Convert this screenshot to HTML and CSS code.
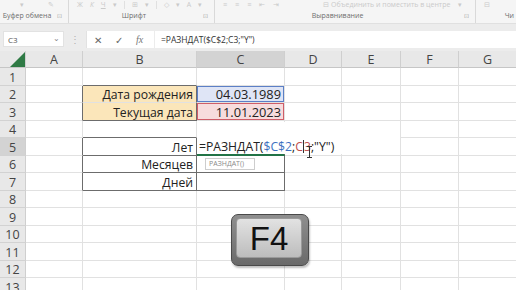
FILE: index.html
```html
<!DOCTYPE html>
<html lang="ru">
<head>
  <meta charset="UTF-8">
  <title>РАЗНДАТ</title>
  <link rel="stylesheet" href="styles.css">
</head>
<body>
  <!-- Ribbon (faded) -->
  <div class="ribbon">
    <div class="group g-clip">
      <div class="tools"><span>▾</span><span>✎</span></div>
      <div class="glabel">Буфер обмена</div>
      <span class="launcher">⊡</span>
    </div>
    <div class="group g-font">
      <div class="tools"><b>Ж</b><i>К</i><u>Ч</u><span>▾</span><span class="sep"></span><span>⊞</span><span>▾</span><span class="sep"></span><span>◇</span><span>▾</span><span>A</span><span>▾</span></div>
      <div class="glabel">Шрифт</div>
      <span class="launcher">⊡</span>
    </div>
    <div class="group g-align">
      <div class="tools"><span>≡</span><span>≡</span><span>≡</span><span>⇤</span><span>⇥</span><span class="merge">⊟ Объединить и поместить в центре</span><span>▾</span></div>
      <div class="glabel">Выравнивание</div>
      <span class="launcher">⊡</span>
    </div>
    <div class="group g-num">
      <div class="tools"><span>⊟</span></div>
      <div class="glabel">Чи</div>
    </div>
  </div>

  <!-- Formula bar -->
  <div class="formula-bar">
    <div class="name-box"><span>C3</span><span class="nb-arrow">⌄</span></div>
    <div class="fb-dots">⋮</div>
    <div class="fb-main">
      <span class="fb-btn">✕</span>
      <span class="fb-btn">✓</span>
      <span class="fb-btn fx">fx</span>
      <div class="fb-text">=РАЗНДАТ($C$2;C3;"Y")</div>
    </div>
  </div>

  <!-- Sheet -->
  <div class="sheet-wrap">
    <table class="sheet">
      <colgroup>
        <col style="width:26px"><col style="width:57px"><col style="width:114px"><col style="width:88px">
        <col style="width:57px"><col style="width:59px"><col style="width:58px"><col style="width:58px">
      </colgroup>
      <tr class="head">
        <th class="corner"><svg width="17" height="15" viewBox="0 0 17 15"><polygon points="17,0 17,15 2,15" fill="#2f7a45"/></svg></th>
        <th>A</th><th>B</th><th class="active">C</th><th>D</th><th>E</th><th>F</th><th>G</th>
      </tr>
      <tr><th>1</th><td></td><td class="bb-dark"></td><td></td><td></td><td></td><td></td><td></td></tr>
      <tr><th>2</th><td class="br-dark"></td><td class="lbl fill-y br-dark">Дата рождения</td><td class="num fill-blue">04.03.1989</td><td></td><td></td><td></td><td></td></tr>
      <tr><th>3</th><td class="br-dark"></td><td class="lbl fill-y br-dark bb-dark">Текущая дата</td><td class="num fill-red">11.01.2023</td><td></td><td></td><td></td><td></td></tr>
      <tr><th>4</th><td></td><td class="bb-dark"></td><td class="bb-dark"></td><td></td><td></td><td></td><td></td></tr>
      <tr><th class="active">5</th><td class="br-dark"></td><td class="lbl br-dark bb-dark">Лет</td><td class="br-dark bb-green"></td><td></td><td></td><td></td><td></td></tr>
      <tr><th>6</th><td class="br-dark"></td><td class="lbl br-dark bb-dark">Месяцев</td><td class="br-dark bb-dark"></td><td></td><td></td><td></td><td></td></tr>
      <tr><th>7</th><td class="br-dark"></td><td class="lbl br-dark bb-dark">Дней</td><td class="br-dark bb-dark"></td><td></td><td></td><td></td><td></td></tr>
      <tr><th>8</th><td></td><td></td><td></td><td></td><td></td><td></td><td></td></tr>
      <tr><th>9</th><td></td><td></td><td></td><td></td><td></td><td></td><td></td></tr>
      <tr><th>10</th><td></td><td></td><td></td><td></td><td></td><td></td><td></td></tr>
      <tr><th>11</th><td></td><td></td><td></td><td></td><td></td><td></td><td></td></tr>
      <tr><th>12</th><td></td><td></td><td></td><td></td><td></td><td></td><td></td></tr>
      <tr><th>13</th><td></td><td></td><td></td><td></td><td></td><td></td><td></td></tr>
    </table>

    <!-- in-cell editor for C5 -->
    <div class="editor">
      <span>=РАЗНДАТ(</span><span class="ref-blue">$C$2</span><span>;</span><span class="ref-red">C<i class="caret"></i>3</span><span>;"Y")</span>
      <svg class="ibeam" width="7" height="12" viewBox="0 0 7 12"><path d="M1 0.5h5M3.5 0.5v11M1 11.5h5" stroke="#333" stroke-width="1" fill="none"/></svg>
    </div>
    <div class="tip">РАЗНДАТ()</div>

    <!-- F4 key -->
    <div class="key"><div class="key-face">F4</div></div>
  </div>
</body>
</html>
```

FILE: styles.css
```css
body {
  margin: 0;
  width: 516px;
  height: 290px;
  overflow: hidden;
  background: #ffffff;
  font-family: "Open Sans", "Noto Sans", sans-serif;
}

/* ribbon */
.ribbon {
  display: flex;
  height: 23px;
  background: #f5f5f5;
  border-bottom: 1px solid #e0e0e0;
  color: #6e6e6e;
  font-size: 7px;
}

.group {
  position: relative;
  display: flex;
  flex-direction: column;
  justify-content: space-between;
  border-right: 1px solid #d9d9d9;
  box-sizing: border-box;
  padding-bottom: 2px;
  overflow: hidden;
}

.g-clip { width: 69px; }
.g-font { width: 146px; }
.g-align { width: 261px; }
.g-num { flex: 1; border-right: none; }

.tools {
  display: flex;
  align-items: center;
  gap: 8px;
  height: 9px;
  color: #cacaca;
  font-size: 7px;
  line-height: 9px;
  padding-left: 8px;
  white-space: nowrap;
}

.tools > * { flex-shrink: 0; }
.tools b, .tools i, .tools u { font-weight: normal; }
.tools .sep { width: 1px; height: 8px; background: #e0e0e0; }
.g-clip .tools { padding-left: 20px; gap: 24px; }
.g-font .tools { gap: 7px; }
.g-align .tools { gap: 8px; }
.tools .merge { margin-left: 36px; font-size: 7px; }
.g-num .tools { padding-left: 8px; }

.glabel {
  padding-right: 15px;
  text-align: center;
  line-height: 10px;
  white-space: nowrap;
}

.g-clip .glabel { padding-right: 14px; }
.g-num .glabel { text-align: right; padding-right: 2px; }

.launcher {
  position: absolute;
  right: 6px;
  bottom: 3px;
  font-size: 6px;
  color: #a8a8a8;
}

/* formula bar */
.formula-bar {
  display: flex;
  height: 27px;
  box-sizing: border-box;
  padding: 7px 0 3px 3px;
  background: #ececec;
}

.name-box {
  display: flex;
  justify-content: space-between;
  align-items: center;
  width: 61px;
  height: 16px;
  box-sizing: border-box;
  padding: 0 3px 0 4px;
  background: #ffffff;
  border: 1px solid #e2e2e2;
  font-size: 8px;
  color: #555;
}

.nb-arrow { font-size: 8px; color: #888; margin-top: -4px; }

.fb-dots {
  width: 22px;
  text-align: center;
  color: #b0b0b0;
  font-size: 10px;
  line-height: 16px;
}

.fb-main {
  display: flex;
  align-items: center;
  flex: 1;
  background: #ffffff;
  border-left: 1px solid #e2e2e2;
}

.fb-btn {
  width: 21px;
  text-align: center;
  color: #666;
  font-size: 10px;
}

.fb-btn.fx { font-family: "Liberation Serif", serif; font-style: italic; color: #777; }

.fb-text {
  flex: 1;
  height: 100%;
  box-sizing: border-box;
  margin-left: 4px;
  padding-left: 6px;
  border-left: 1px solid #ececec;
  font-size: 8.5px;
  line-height: 17px;
  color: #333;
}

/* sheet */
.sheet-wrap {
  position: relative;
}

.sheet {
  border-collapse: separate;
  border-spacing: 0;
  table-layout: fixed;
  width: 517px;
  font-size: 12.2px;
  color: #222;
}

.sheet th,
.sheet td {
  height: 17.5px;
  box-sizing: border-box;
  padding: 0 3px;
  border-right: 1px solid #e1e1e1;
  border-bottom: 1px solid #e1e1e1;
  white-space: nowrap;
  overflow: hidden;
  line-height: 15px;
  vertical-align: bottom;
}

.sheet th {
  background: #e8e8e8;
  color: #444;
  font-weight: normal;
  text-align: center;
  border-right-color: #cfcfcf;
  border-bottom-color: #d2d2d2;
  padding: 0;
  font-size: 12.5px;
}

.sheet tr.head th {
  height: 17px;
  border-bottom-color: #c6c6c6;
  vertical-align: middle;
}

.sheet th.active { background: #d3d3d3; }

.sheet th.corner {
  text-align: right;
  vertical-align: bottom;
  line-height: 0;
}

.lbl, .num { text-align: right; }
.num { font-size: 12.8px; }

.fill-y { background: #fbe6ba; }

.fill-blue {
  background: #dfe5f6;
  box-shadow: inset 0 0 0 1px #5b7fc6;
}

.fill-red {
  background: #f7dcdd;
  box-shadow: inset 0 0 0 1px #cf5d68;
}

.sheet td.br-dark { border-right-color: #6c6c6c; }
.sheet td.bb-dark { border-bottom-color: #6c6c6c; }
.sheet td.bb-green { border-bottom: 2px solid #217346; }

/* cell editor over C5 */
.editor {
  position: absolute;
  left: 197px;
  top: 70.5px;
  width: 203px;
  height: 32.5px;
  box-sizing: border-box;
  padding: 17px 0 0 2px;
  background: #ffffff;
  font-size: 12.2px;
  line-height: 15px;
  color: #222;
  white-space: nowrap;
}

.ref-blue { color: #3d6fc0; }
.ref-red { color: #c0504d; }

.caret {
  display: inline-block;
  width: 0;
  height: 13px;
  border-left: 1px solid #333;
  vertical-align: -2px;
}

.ibeam {
  position: absolute;
  left: 109px;
  top: 24px;
}

.tip {
  position: absolute;
  left: 205px;
  top: 106.5px;
  width: 50px;
  height: 12px;
  box-sizing: border-box;
  border: 1px solid #cdcdcd;
  background: #ffffff;
  color: #8a8a8a;
  font-size: 7px;
  line-height: 10px;
  padding-left: 3px;
}

/* F4 key */
.key {
  position: absolute;
  left: 231px;
  top: 163px;
  width: 78px;
  height: 52px;
  box-sizing: border-box;
  padding: 3px 6px 7px 4px;
  border: 1px solid #4a4a4a;
  border-radius: 7px;
  background: linear-gradient(to bottom, #8f8f8f, #6a6a6a);
  box-shadow: 1px 2px 2px rgba(0, 0, 0, 0.25);
}

.key-face {
  height: 100%;
  border-radius: 4px;
  border: 1px solid #9a9a9a;
  background: linear-gradient(to bottom, #e2e2e2, #bdbdbd);
  box-sizing: border-box;
  font-family: "Liberation Sans", Arial, sans-serif;
  font-size: 33px;
  line-height: 40px;
  text-align: center;
  color: #111;
}
```
